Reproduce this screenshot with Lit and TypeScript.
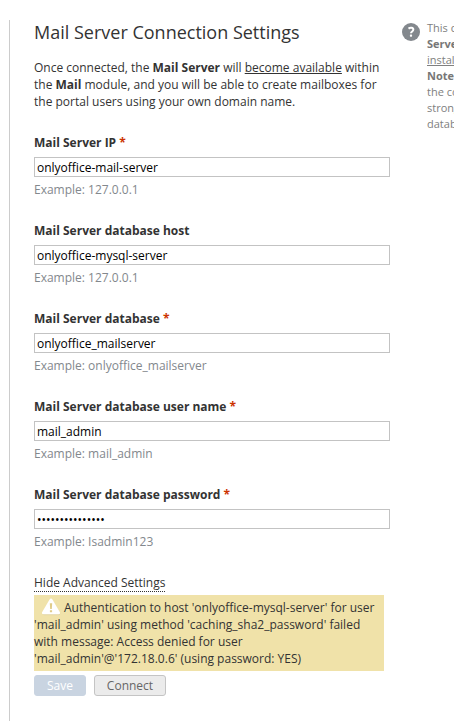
import { LitElement, html, css, nothing } from "lit";
import { customElement } from "lit/decorators.js";

interface Field {
  label: string;
  value: string;
  example: string;
  required: boolean;
  type: string;
}

const FIELDS: Field[] = [
  { label: "Mail Server IP", value: "onlyoffice-mail-server", example: "127.0.0.1", required: true, type: "text" },
  { label: "Mail Server database host", value: "onlyoffice-mysql-server", example: "127.0.0.1", required: false, type: "text" },
  { label: "Mail Server database", value: "onlyoffice_mailserver", example: "onlyoffice_mailserver", required: true, type: "text" },
  { label: "Mail Server database user name", value: "mail_admin", example: "mail_admin", required: true, type: "text" },
  { label: "Mail Server database password", value: "123456789012345", example: "Isadmin123", required: true, type: "password" },
];

@customElement("app-root")
export class AppRoot extends LitElement {
  static styles = css`
    :host {
      display: flex;
      box-sizing: border-box;
      width: 100%;
      height: 721px;
      padding: 20px 0 0 9px;
      overflow: hidden;
      background: #fff;
      color: #333;
      font: 12px/17px "Open Sans", sans-serif;
    }
    .settings {
      box-sizing: border-box;
      flex: none;
      width: 381px;
      border-left: 1px solid #ccc;
      padding-left: 24px;
    }
    h1 {
      margin: 0;
      font-size: 18px;
      line-height: 24px;
      font-weight: 400;
    }
    .intro {
      margin: 15px 0 0;
      white-space: nowrap;
    }
    .link {
      color: inherit;
      text-decoration: underline;
    }
    .field {
      height: 64px;
      margin-top: 24px;
    }
    .label {
      display: block;
      font-weight: 700;
    }
    .star {
      color: #c30;
    }
    .input {
      display: block;
      box-sizing: border-box;
      width: 356px;
      height: 20px;
      margin: 6px 0 4px;
      padding: 0 2px;
      border: 1px solid #c3c3c3;
      border-radius: 0;
      background: #fff;
      color: #000;
      font: inherit;
      outline: none;
    }
    .example {
      color: #83888d;
    }
    .toggle {
      display: block;
      width: max-content;
      margin-top: 24px;
      border-bottom: 1px dotted #333;
      line-height: 17px;
    }
    .alert {
      box-sizing: border-box;
      width: 350px;
      height: 76px;
      margin-top: 3px;
      padding: 4px 0;
      background: #f0e2a9;
      white-space: nowrap;
    }
    .warn {
      width: 20px;
      height: 18px;
      margin: -4px 3px -2px 7px;
      vertical-align: -2px;
    }
    .buttons {
      display: flex;
      gap: 8px;
      margin-top: 4px;
    }
    .button {
      box-sizing: border-box;
      height: 21px;
      padding: 0;
      border: 1px solid #c4c4c4;
      border-radius: 3px;
      background: #ebebeb;
      color: #666;
      font: 12px/19px "Open Sans", sans-serif;
      width: 72px;
    }
    .save {
      width: 52px;
      border-color: #c9d4e1;
      background: #c9d4e1;
      color: #fff;
    }
    .help {
      display: flex;
      flex: none;
      gap: 7px;
      margin-left: 12px;
      color: #83888d;
      font-size: 11px;
      line-height: 16px;
      white-space: nowrap;
    }
    .help .text {
      color: #808080;
    }
    .help b {
      color: #777;
    }
    .question {
      flex: none;
      width: 18px;
      height: 18px;
      margin-top: 3px;
    }
  `;

  private renderField(f: Field) {
    return html`<div class="field">
      <label class="label">${f.label}${f.required ? html` <span class="star">*</span>` : nothing}</label>
      <input class="input" type=${f.type} .value=${f.value} />
      <div class="example">Example: ${f.example}</div>
    </div>`;
  }

  render() {
    return html`
      <main class="settings">
        <h1>Mail Server Connection Settings</h1>
        <p class="intro">
          Once connected, the <b>Mail Server</b> will <a class="link">become available</a> within<br />
          the <b>Mail</b> module, and you will be able to create mailboxes for<br />
          the portal users using your own domain name.
        </p>
        ${FIELDS.map((f) => this.renderField(f))}
        <a class="toggle">Hide Advanced Settings</a>
        <div class="alert">
          <svg class="warn" viewBox="0 0 20 18">
            <path d="M8.6 1.8Q10 -.2 11.4 1.8L18.6 14.4Q19.2 16.3 17.4 16.3H2.6Q.8 16.3 1.4 14.4Z" fill="#e2d5a2" transform="translate(.4 .9)" />
            <path d="M8.4 1.8Q10 -.6 11.6 1.8L18.9 14.2Q19.6 16.3 17.5 16.3H2.5Q.4 16.3 1.1 14.2Z" fill="#fff" />
            <path d="M8.8 5.2H11.2L10.8 11H9.2ZM8.9 12.2H11.1V14.2H8.9Z" fill="#e0cc88" />
          </svg>Authentication to host 'onlyoffice-mysql-server' for user<br />
          'mail_admin' using method 'caching_sha2_password' failed<br />
          with message: Access denied for user<br />
          'mail_admin'@'172.18.0.6' (using password: YES)
        </div>
        <div class="buttons">
          <button class="button save">Save</button>
          <button class="button">Connect</button>
        </div>
      </main>
      <aside class="help">
        <svg class="question" viewBox="0 0 18 18">
          <circle cx="9" cy="9" r="9" fill="#83888d" />
          <path d="M6.5 5.6C8.2 4.3 11.4 4.5 11.3 6.8C11.2 8.4 9 8.6 9 10.3" fill="none" stroke="#fff" stroke-width="2" />
          <rect x="7.9" y="11.6" width="2.2" height="2.1" rx=".6" fill="#fff" />
        </svg>
        <div class="text">
          This command<br /><b>Server</b><br /><a class="link">installed</a><br /><b>Note</b><br />the connection<br />strongly<br />database
        </div>
      </aside>
    `;
  }
}
